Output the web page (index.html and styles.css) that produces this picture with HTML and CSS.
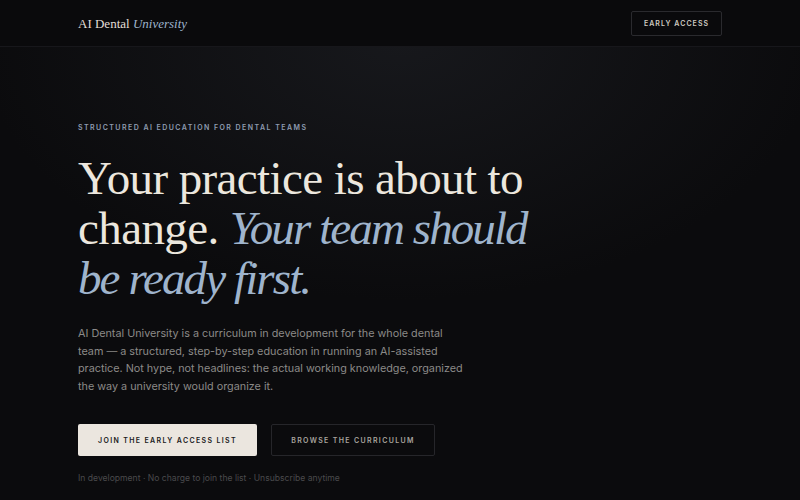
FILE: index.html
```html
<!DOCTYPE html>
<html lang="en">
<head>
<meta charset="utf-8">
<title>AI Dental University</title>
<link rel="stylesheet" href="styles.css">
</head>
<body>
<header class="site-header">
  <div class="logo">AI Dental <em>University</em></div>
  <a class="header-btn" href="#">EARLY ACCESS</a>
</header>
<main class="hero">
  <p class="eyebrow">STRUCTURED AI EDUCATION FOR DENTAL TEAMS</p>
  <h1 class="headline">Your practice is about to change. <em>Your team should be ready first.</em></h1>
  <p class="lead">AI Dental University is a curriculum in development for the whole dental team — a structured, step-by-step education in running an AI-assisted practice. Not hype, not headlines: the actual working knowledge, organized the way a university would organize it.</p>
  <div class="actions">
    <a class="btn btn-primary" href="#">JOIN THE EARLY ACCESS LIST</a>
    <a class="btn btn-secondary" href="#">BROWSE THE CURRICULUM</a>
  </div>
  <p class="note">In development · No charge to join the list · Unsubscribe anytime</p>
</main>
</body>
</html>
```

FILE: styles.css
```css
* { box-sizing: border-box; }
html, body { margin: 0; padding: 0; }
body {
  width: 800px;
  height: 500px;
  overflow: hidden;
  background-color: #0b0b0d;
  background-image: radial-gradient(ellipse 420px 260px at 400px 40px, #17181c 0%, rgba(11,11,13,0) 100%);
  font-family: "Inter", "DejaVu Sans", sans-serif;
  color: #e9e4dc;
}
a { text-decoration: none; }
.site-header {
  height: 47px;
  display: flex;
  align-items: center;
  justify-content: space-between;
  padding: 0 78px;
  background: #0a0a0c;
  border-bottom: 1px solid #17171b;
}
.logo {
  font-family: "Liberation Serif", "DejaVu Serif", serif;
  font-size: 13px;
  color: #e3ded6;
  padding-top: 1px;
}
.logo em { color: #9fb4cc; }
.header-btn {
  display: flex;
  align-items: center;
  justify-content: center;
  width: 91px;
  height: 25px;
  border: 1px solid #2a2a2e;
  border-radius: 2px;
  font-size: 7px;
  font-weight: 600;
  letter-spacing: 1.05px;
  color: #cfcac2;
}
.hero {
  padding: 76px 78px 0;
}
.eyebrow {
  margin: 0;
  font-size: 7px;
  font-weight: 600;
  letter-spacing: 1.45px;
  color: #8e9bb0;
}
.headline {
  margin: 21px 0 0;
  max-width: 470px;
  font-family: "Liberation Serif", "DejaVu Serif", serif;
  font-weight: 400;
  font-size: 47px;
  line-height: 50px;
  letter-spacing: -0.6px;
  color: #ece7de;
}
.headline em {
  color: #9fb4cc;
  letter-spacing: -1.9px;
}
.lead {
  margin: 22px 0 0;
  max-width: 387px;
  font-size: 10.8px;
  line-height: 17.6px;
  color: #8b8a88;
}
.actions {
  display: flex;
  gap: 14px;
  margin-top: 29px;
}
.btn {
  display: flex;
  align-items: center;
  justify-content: center;
  height: 32px;
  border-radius: 2px;
  font-size: 7px;
  font-weight: 600;
  letter-spacing: 1.35px;
}
.btn-primary {
  width: 179px;
  background: #ebe6df;
  color: #1a1a1c;
}
.btn-secondary {
  width: 164px;
  border: 1px solid #26262a;
  color: #a8a49e;
}
.note {
  margin: 17px 0 0;
  font-size: 8.6px;
  color: #4a4a4c;
}
```
